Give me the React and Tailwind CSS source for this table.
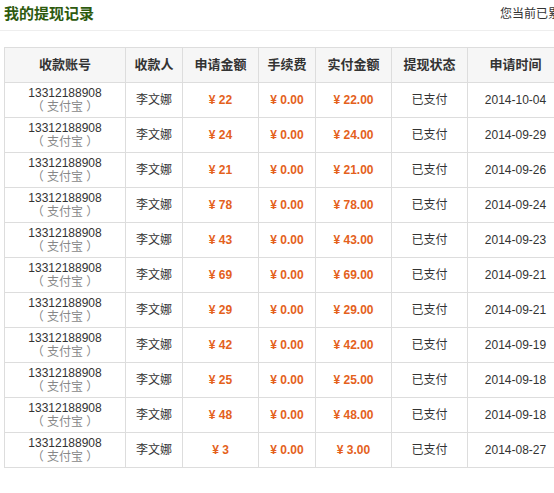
import React from "react";

const rows = [
  ["22", "2014-10-04"],
  ["24", "2014-09-29"],
  ["21", "2014-09-26"],
  ["78", "2014-09-24"],
  ["43", "2014-09-23"],
  ["69", "2014-09-21"],
  ["29", "2014-09-21"],
  ["42", "2014-09-19"],
  ["25", "2014-09-18"],
  ["48", "2014-09-18"],
  ["3", "2014-08-27"],
];

const heads = [
  ["收款账号", "w-[121px]"],
  ["收款人", "w-[57px]"],
  ["申请金额", "w-[76px]"],
  ["手续费", "w-[57px]"],
  ["实付金额", "w-[76px]"],
  ["提现状态", "w-[76px]"],
  ["申请时间", "w-[96px]"],
];

const cell = "border border-[#dddddd] text-center align-middle p-0";
const money = "text-[#e4611c] font-bold";

export default function App() {
  return (
    <div
      className="w-[554px] h-[493px] overflow-hidden bg-white text-[12px] text-[#333]"
      style={{ fontFamily: '"Liberation Sans", "Noto Sans CJK SC", sans-serif' }}
    >
      <div className="flex items-start justify-between pl-[4px] h-[31px] border-b border-[#eeeeee]">
        <h2 className="text-[15px] font-bold text-[#2d5a0e] leading-[16px] mt-[6px]">我的提现记录</h2>
        <div className="whitespace-nowrap mt-[5px] w-[54px] overflow-hidden">您当前已累计</div>
      </div>

      <div className="pl-[4px] pt-[16px]">
        <table className="table-fixed border-collapse w-[559px]">
          <thead>
            <tr className="h-[35px] bg-[#f6f6f6]">
              {heads.map(([t, w]) => (
                <th key={t} className={`${cell} ${w} text-[13px] font-bold text-[#333]`}>
                  {t}
                </th>
              ))}
            </tr>
          </thead>
          <tbody>
            {rows.map(([amt, date], i) => (
              <tr key={i} className="h-[35px]">
                <td className={cell}>
                  <div className="leading-[13px] text-[#333]">13312188908</div>
                  <div className="leading-[14px] text-[#888]">（ 支付宝 ）</div>
                </td>
                <td className={cell}>李文娜</td>
                <td className={`${cell} ${money}`}>¥ {amt}</td>
                <td className={`${cell} ${money}`}>¥ 0.00</td>
                <td className={`${cell} ${money}`}>¥ {amt}.00</td>
                <td className={cell}>已支付</td>
                <td className={cell}>{date}</td>
              </tr>
            ))}
          </tbody>
        </table>
      </div>
    </div>
  );
}
